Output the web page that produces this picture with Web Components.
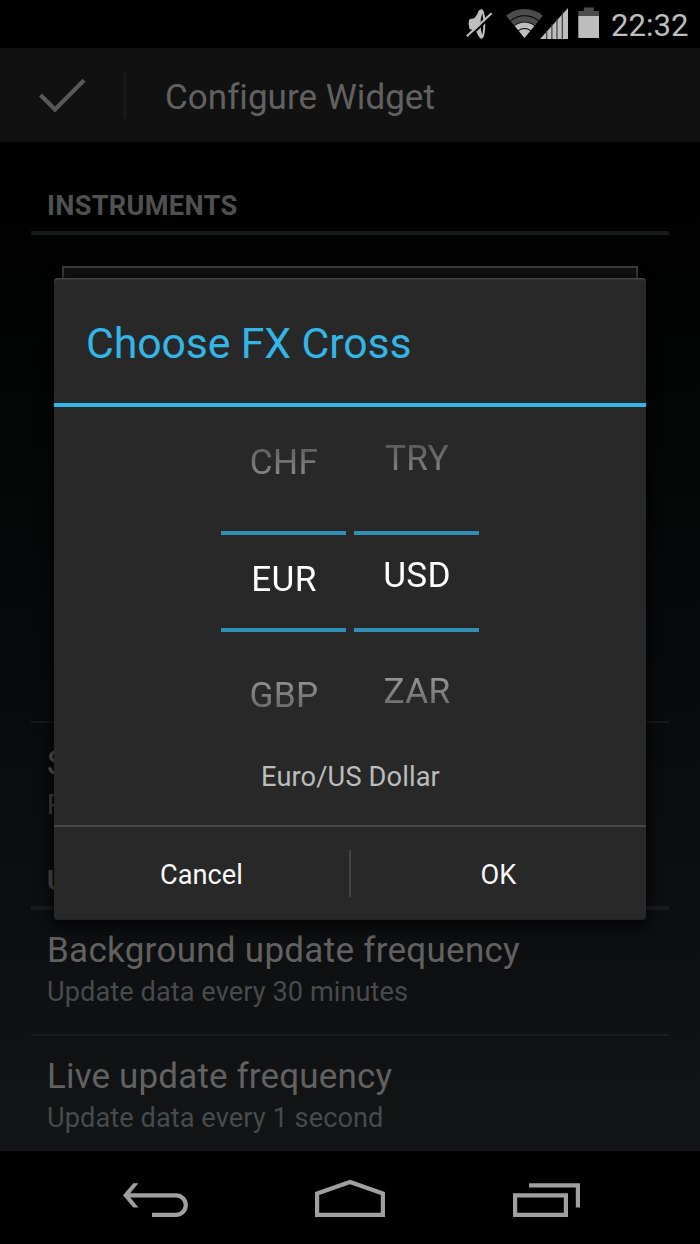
<!DOCTYPE html>
<html lang="en">
<head>
<meta charset="utf-8">
<title>Configure Widget</title>
<style>
  body { margin: 0; background: #000; font-family: Roboto, sans-serif; }
</style>
</head>
<body>
<phone-screen>
  <status-bar slot="status" time="22:32"></status-bar>
  <action-bar>Configure Widget</action-bar>
  <pref-list>
    <pref-header>Instruments</pref-header>
    <widget-preview></widget-preview>
    <pref-row class="last" style="--gap: 1px">Size<span slot="summary">Pick a size</span></pref-row>
    <pref-header class="second">Updates</pref-header>
    <pref-row style="letter-spacing: .28px">Background update frequency<span slot="summary">Update data every 30 minutes</span></pref-row>
    <pref-row>Live update frequency<span slot="summary">Update data every 1 second</span></pref-row>
  </pref-list>
  <fx-dialog slot="dialog">
    <span slot="title">Choose FX Cross</span>
    <fx-picker values="CHF,EUR,GBP" style="--shift: -3px"></fx-picker>
    <fx-picker values="TRY,USD,ZAR" style="--shift: -7px"></fx-picker>
    <span slot="message">Euro/US Dollar</span>
    <span slot="cancel">Cancel</span>
    <span slot="ok">OK</span>
  </fx-dialog>
  <nav-bar slot="nav"></nav-bar>
</phone-screen>

<script>
(function() {

  // small helper so every element gets its shadow root the same way
  function define(name, html, setup) {
    const template = document.createElement('template');
    template.innerHTML = html;
    window.customElements.define(name, class extends HTMLElement {
      constructor() {
        super();
        this.attachShadow({mode: 'open'});
        this.shadowRoot.appendChild(template.content.cloneNode(true));
      }
      connectedCallback() {
        if (setup) setup(this, this.shadowRoot);
      }
    });
  }

  define('phone-screen', `
    <style>
      :host { display: flex; flex-direction: column; position: relative; width: 700px; height: 1244px; overflow: hidden; background: #000; }
      main { flex: 1; min-height: 0; overflow: hidden; background: linear-gradient(#000 10%, #040505 35%, #0d0e10 78%, #121416); }
    </style>
    <slot name="status"></slot>
    <main><slot></slot></main>
    <slot name="nav"></slot>
    <slot name="dialog"></slot>
  `);

  define('status-bar', `
    <style>
      :host { display: flex; height: 48px; justify-content: flex-end; color: #bebebe; }
      svg { flex: none; }
      time { width: 89px; font-size: 31.1px; line-height: 51px; white-space: nowrap; }
    </style>
    <svg width="151" height="48" viewBox="460 0 151 48">
      <path d="M469 20Q470 18 474 18.500Q477.500 15 478.500 11Q480.500 8 483 10Q485.300 14 485.300 24T483 38Q480.500 40 478.500 36L476 31L469.500 29Q468 24 469 20z" fill="#bebebe"/>
      <path d="M482.300 13q-3.600 11 0 22q2-11 0-22z" fill="#000"/>
      <path d="M468 38L493 14.700" stroke="#000" stroke-width="2"/>
      <path d="M466.800 36.300L491.600 13.200" stroke="#bebebe" stroke-width="2.200"/>
      <g fill="none">
        <path d="M508.100 18.100A25.800 25.800 0 0 1 540.900 18.100" stroke="#4c4c4c" stroke-width="6.200"/>
        <path d="M512.400 23.300A19 19 0 0 1 536.600 23.300" stroke="#4c4c4c" stroke-width="5.500"/>
        <path d="M516.400 28.100A12.800 12.800 0 0 1 532.600 28.100" stroke="#bebebe" stroke-width="5.600"/>
      </g>
      <path d="M518.700 31A9 9 0 0 1 530.300 31L524.500 38z" fill="#bebebe"/>
      <path d="M540 39L568 8V39z" fill="#bebebe"/>
      <path d="M546.700 30v9M551.900 24v15M557 18v21M562.300 12v27" stroke="#333" stroke-width="1.100"/>
      <path d="M578.300 16v-5h5.500v-3.500h10v3.500h5.200v5z" fill="#4c4c4c"/>
      <path d="M578.300 16h20.700v22h-20.700z" fill="#bebebe"/>
    </svg>
    <time></time>
  `, (el, root) => {
    root.querySelector('time').textContent = el.getAttribute('time');
  });

  define('action-bar', `
    <style>
      :host { display: flex; align-items: center; height: 94px; background: #111; color: #616161; font-size: 35px; }
      svg { width: 124px; height: 94px; }
      i { width: 2px; height: 46px; background: #1b1b1b; margin-right: 39px; }
      h1 { margin: 0; font-size: inherit; font-weight: 400; line-height: 44px; padding-top: 5px; letter-spacing: .03px; white-space: nowrap; }
    </style>
    <svg viewBox="0 48 124 94"><path d="M40.500 95L55 109.500L84 80.300" fill="none" stroke="#585858" stroke-width="4.200"/></svg>
    <i></i>
    <h1><slot></slot></h1>
  `);

  define('pref-list', `
    <style>
      :host { display: block; padding: 46px 31px 0; }
    </style>
    <slot></slot>
  `);

  define('pref-header', `
    <style>
      :host { display: block; height: 36px; padding: 0 16px 7px; border-bottom: 4px solid #191b1b; color: #4f5050; font-size: 27.2px; font-weight: 700; line-height: 36px; letter-spacing: .28px; text-transform: uppercase; }
      :host(.second) { margin-top: 14px; }
    </style>
    <slot></slot>
  `);

  define('widget-preview', `
    <style>
      :host { display: block; box-sizing: border-box; height: 488px; padding: 31px 31px 0; border-bottom: 2px solid #17191a; }
      div { height: 380px; border: 2px solid #3a3a3a; box-sizing: border-box; background: #111; }
    </style>
    <div></div>
  `);

  define('pref-row', `
    <style>
      :host { display: block; box-sizing: border-box; height: 126px; padding: 18px 16px 0; border-bottom: 2px solid #1a1c1d; color: #616161; font-size: 35px; line-height: 45px; white-space: nowrap; letter-spacing: .15px; }
      :host(.last) { border-color: transparent; }
      p { margin: var(--gap, 1px) 0 0; font-size: 27.2px; line-height: 36px; color: #484a4b; letter-spacing: .06px; }
    </style>
    <slot></slot>
    <p><slot name="summary"></slot></p>
  `);

  define('fx-dialog', `
    <style>
      :host { position: absolute; left: 54px; top: 278px; width: 592px; height: 642px; display: flex; flex-direction: column; box-sizing: border-box; background: #282828; border-radius: 4px; box-shadow: inset 0 2px 0 -.5px #444, inset 0 -1px 0 #222, 0 5px 14px 2px rgba(0, 0, 0, .75); }
      h2 { margin: 0; height: 125px; border-bottom: 4px solid #33b5e5; padding-left: 32px; font-size: 42.8px; font-weight: 400; line-height: 130px; color: #33b5e5; letter-spacing: -.12px; white-space: nowrap; }
      .pickers { display: flex; justify-content: center; gap: 8px; height: 350px; }
      .message { flex: 1; text-align: center; font-size: 27.2px; line-height: 41px; letter-spacing: .14px; padding-left: 1px; color: #bcbcbc; }
      footer { display: flex; align-items: center; height: 93px; border-top: 2px solid #464646; color: #f8f8f8; font-size: 27.2px; }
      footer span { flex: 1; padding-top: 2px; text-align: center; }
      footer i { width: 2px; height: 47px; background: #434343; }
    </style>
    <h2><slot name="title"></slot></h2>
    <div class="pickers"><slot></slot></div>
    <div class="message"><slot name="message"></slot></div>
    <footer><span><slot name="cancel"></slot></span><i></i><span><slot name="ok"></slot></span></footer>
  `);

  define('fx-picker', `
    <style>
      :host { display: block; position: relative; width: 125px; height: 350px; }
      .fade { height: 350px; overflow: hidden; -webkit-mask-image: linear-gradient(transparent, #000 155px, #000 192px, transparent); mask-image: linear-gradient(transparent, #000 155px, #000 192px, transparent); }
      .wheel { margin-top: var(--shift); padding-left: 1px; color: #fff; font-size: 35.2px; line-height: 116.6px; letter-spacing: .3px; text-align: center; }
      /* the two bars around the selected value */
      .selection { position: absolute; left: 0; right: 0; top: 124px; height: 93px; border: solid #2f8fb5; border-width: 4px 0; }
    </style>
    <div class="fade"><div class="wheel"></div></div>
    <div class="selection"></div>
  `, (el, root) => {
    const wheel = root.querySelector('.wheel');
    wheel.innerHTML = el.getAttribute('values').split(',').map((v) => `<div>${v}</div>`).join('');
  });

  define('nav-bar', `
    <style>
      :host { display: flex; height: 93px; justify-content: center; background: #000; }
      svg { width: 195px; height: 93px; fill: none; stroke: #a0a0a0; stroke-width: 4.2; }
    </style>
    <svg viewBox="58 1151 195 93"><path d="M125.500 1195.300H176A9.700 9.700 0 0 1 176 1214.900H152"/><path d="M123 1195.300L133.300 1183.300H138.400L128.500 1195.300L138.400 1207.400H133.300z" fill="#a0a0a0" stroke="none"/></svg>
    <svg viewBox="253 1151 195 93"><path d="M317.100 1214.900V1193.400L350 1182L382.900 1193.400V1214.900z"/></svg>
    <svg viewBox="448 1151 195 93"><path d="M515.100 1195.300H565.900V1214.900H515.100zM529 1185.300H577.900V1207.500"/></svg>
  `);

})();
</script>
</body>
</html>
